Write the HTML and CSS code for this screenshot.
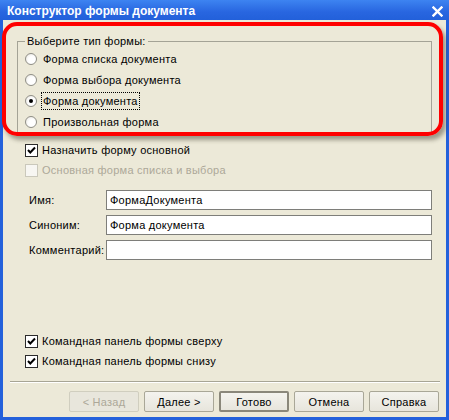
FILE: index.html
```html
<!DOCTYPE html>
<html lang="ru">
<head>
<meta charset="utf-8">
<title>Конструктор формы документа</title>
<link rel="stylesheet" href="styles.css">
</head>
<body>
<div class="window">
  <div class="titlebar">
    <span class="title">Конструктор формы документа</span>
    <svg class="close" width="11" height="11" viewBox="0 0 11 11"><path d="M1.5 1.5 L9.5 9.5 M9.5 1.5 L1.5 9.5" stroke="#fff" stroke-width="2.4" stroke-linecap="square"/></svg>
  </div>
  <div class="client">
    <fieldset class="group">
      <legend>Выберите тип формы:</legend>
      <div class="opt"><span class="radio"></span><span class="lbl">Форма списка документа</span></div>
      <div class="opt"><span class="radio"></span><span class="lbl">Форма выбора документа</span></div>
      <div class="opt"><span class="radio checked"></span><span class="lbl focus">Форма документа</span></div>
      <div class="opt"><span class="radio"></span><span class="lbl">Произвольная форма</span></div>
    </fieldset>

    <div class="checks top-checks">
      <div class="chk"><span class="box"><svg width="11" height="11" viewBox="0 0 11 11"><path d="M2 5 L4.3 7.5 L9 2.5" fill="none" stroke="#000" stroke-width="2"/></svg></span><span class="lbl">Назначить форму основной</span></div>
      <div class="chk disabled"><span class="box"></span><span class="lbl">Основная форма списка и выбора</span></div>
    </div>

    <div class="fields">
      <span class="flabel">Имя:</span><div class="input">ФормаДокумента</div>
      <span class="flabel">Синоним:</span><div class="input">Форма документа</div>
      <span class="flabel">Комментарий:</span><div class="input"></div>
    </div>

    <div class="spacer"></div>

    <div class="checks bottom-checks">
      <div class="chk"><span class="box"><svg width="11" height="11" viewBox="0 0 11 11"><path d="M2 5 L4.3 7.5 L9 2.5" fill="none" stroke="#000" stroke-width="2"/></svg></span><span class="lbl">Командная панель формы сверху</span></div>
      <div class="chk"><span class="box"><svg width="11" height="11" viewBox="0 0 11 11"><path d="M2 5 L4.3 7.5 L9 2.5" fill="none" stroke="#000" stroke-width="2"/></svg></span><span class="lbl">Командная панель формы снизу</span></div>
    </div>

    <div class="sep"></div>

    <div class="buttons">
      <button class="btn" disabled>&lt; Назад</button>
      <button class="btn">Далее &gt;</button>
      <button class="btn default">Готово</button>
      <button class="btn">Отмена</button>
      <button class="btn">Справка</button>
    </div>
  </div>
  <div class="highlight"></div>
</div>
</body>
</html>
```

FILE: styles.css
```css
* { box-sizing: border-box; }
html, body { margin: 0; padding: 0; }
body {
  font-family: "Liberation Sans", Arial, sans-serif;
  font-size: 11px;
  letter-spacing: 0.25px;
  color: #000;
  background: #ece9d8;
}
.window {
  position: relative;
  width: 449px;
  height: 420px;
  background: #2461db;
  padding: 0 3px 3px 3px;
  display: flex;
  flex-direction: column;
}
.titlebar {
  height: 20px;
  margin: 0 -3px;
  padding: 0 7px 0 7px;
  background: linear-gradient(#3d84f1, #2866e0 60%, #2260da);
  display: flex;
  align-items: center;
  justify-content: space-between;
}
.title {
  color: #fff;
  font-weight: bold;
  font-size: 12px;
  letter-spacing: 0;
  padding-top: 2px;
}
.close { margin-top: 3px; margin-right: -1px; }

.client {
  flex: 1;
  background: #ece9d8;
  display: flex;
  flex-direction: column;
  padding: 15px 14px 5px 14px;
}

.group {
  margin: 0;
  padding: 0 0 1px 7px;
  border: 1px solid #a4a396;
  height: 99px;
}
.group legend {
  padding: 0 2px;
  line-height: 13px;
}
.opt {
  height: 21px;
  display: flex;
  align-items: center;
  gap: 4px;
}
.radio {
  width: 12px;
  height: 12px;
  border-radius: 50%;
  border: 1px solid #8f8e86;
  background: radial-gradient(circle at 60% 60%, #fff 40%, #e6e4dc 100%);
  position: relative;
  flex: none;
}
.radio.checked::after {
  content: "";
  position: absolute;
  left: 3px;
  top: 3px;
  width: 4px;
  height: 4px;
  border-radius: 50%;
  background: #000;
}
.lbl { line-height: 14px; padding: 1px 1px; border: 1px solid transparent; }
.lbl.focus { border: 1px dotted #000; }

.top-checks { margin-top: 6px; margin-left: 8px; }
.chk {
  height: 20px;
  display: flex;
  align-items: center;
  gap: 2px;
}
.box {
  width: 13px;
  height: 13px;
  border: 1px solid #2b2b2b;
  background: #fff;
  display: flex;
  align-items: center;
  justify-content: center;
  flex: none;
}
.chk.disabled .box { border-color: #cac8bb; background: #f7f6f2; }
.chk.disabled .lbl { color: #aca899; }

.fields {
  margin-top: 10px;
  padding-left: 12px;
  display: grid;
  grid-template-columns: 77px 1fr;
  row-gap: 5px;
  align-items: center;
}
.input {
  height: 20px;
  border: 1px solid #7e7e7a;
  background: #fff;
  padding: 0 3px;
  line-height: 18px;
}

.spacer { flex: 1; }

.bottom-checks { margin-left: 8px; }

.sep {
  margin: 10px -8px 0 -7px;
  height: 2px;
  border-top: 1px solid #a7a595;
  border-bottom: 1px solid #fff;
}

.buttons {
  margin: 8px -7px 0 0;
  display: flex;
  justify-content: flex-end;
  gap: 5px;
}
.btn {
  width: 70px;
  height: 21px;
  font-family: "Liberation Sans", Arial, sans-serif;
  font-size: 11px;
  letter-spacing: 0.25px;
  color: #000;
  background: linear-gradient(#f4f3ee, #e7e5dc);
  border: 1px solid #a9a797;
  border-radius: 2px;
  padding: 0;
}
.btn.default { border: 2px solid #8a877a; }
.btn:disabled { color: #aca899; border-color: #d0cebf; background: #e8e6dc; }

.highlight {
  position: absolute;
  left: 2px;
  top: 22px;
  width: 441px;
  height: 114px;
  border: 4px solid #ff0000;
  border-radius: 15px;
  box-shadow: 3px 4px 4px rgba(60, 55, 40, 0.45);
  pointer-events: none;
}
```
